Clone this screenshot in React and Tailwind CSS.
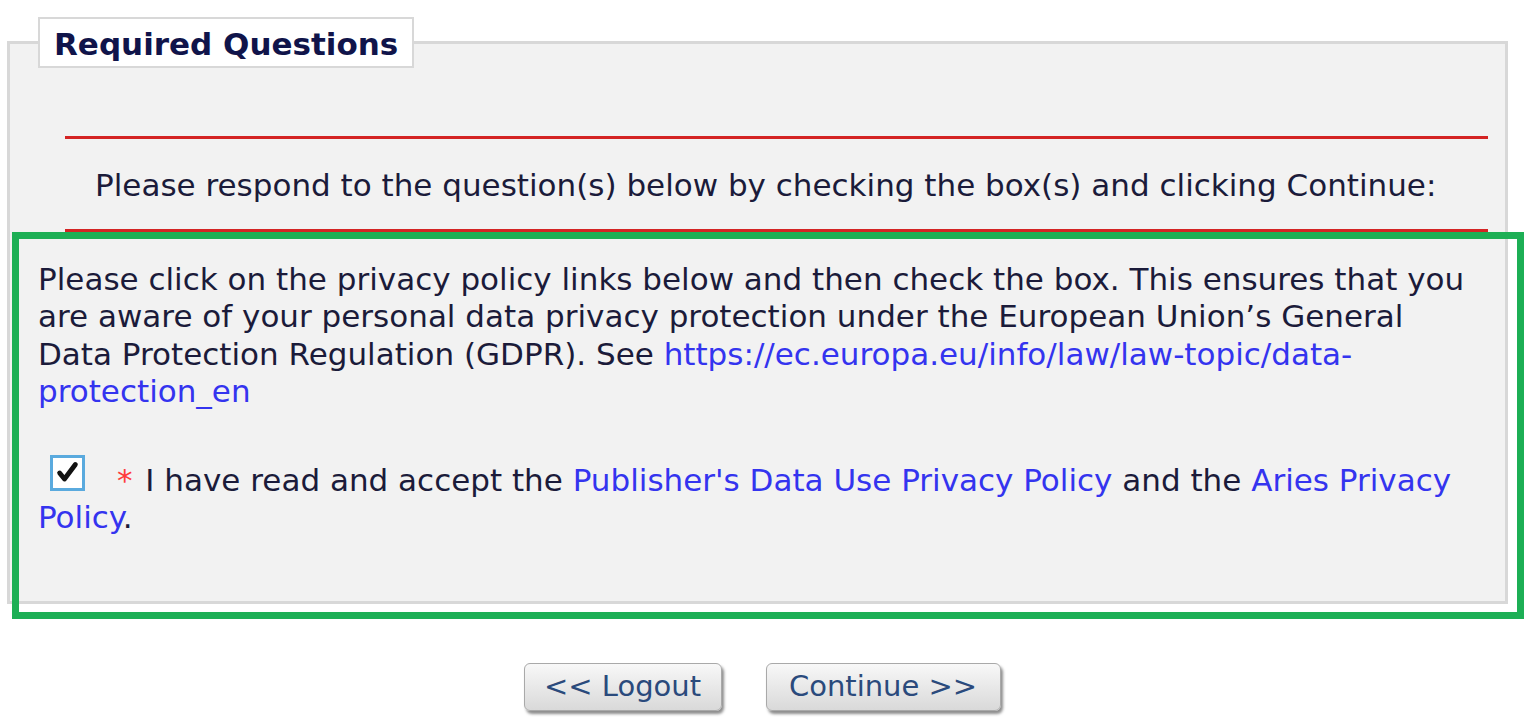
import React from "react"

const font = "font-['DejaVu_Sans',sans-serif]"

const Checkbox = () => (
    <span className="inline-block align-baseline w-[35px] h-[36px] border-[3px] border-[#5aaade] bg-white">
        <svg viewBox="0 0 24 24" className="w-full h-full">
            <path d="M5.5 12 L9.5 17 L18.5 5" fill="none" stroke="#111" strokeWidth="4" strokeLinecap="round" strokeLinejoin="round" />
        </svg>
    </span>
)

const Button = ({ label, width }) => (
    <button
        type="button"
        className={`${width} h-[48px] rounded-[6px] border border-[#a9a9a9] bg-gradient-to-b from-[#f8f8f8] to-[#d9d9d9] shadow-[2px_3px_3px_rgba(0,0,0,0.45)] text-[29px] leading-none text-[#2a4a7c]`}
    >
        {label}
    </button>
)

export default function App() {
    return (
        <div className={`relative w-full h-[718px] bg-white pt-[17px] ${font}`}>
            <fieldset className="ml-[7px] mr-[16px] border-[3px] border-[#d8d8d8] bg-[#f2f2f2] pb-[64px]">
                <legend className="ml-[28px] border-2 border-[#d8d8d8] bg-white px-[14px] pt-[7px] pb-[3px] text-[31px] leading-[37px] font-bold text-[#10144a]">
                    Required Questions
                </legend>

                <div className="mt-[68px] ml-[55px] mr-[17px] h-[3px] bg-[#d42424]" />
                <div className="mt-[28px] pl-[85px] text-[31px] leading-[37.5px] text-[#1b1b3a]">
                    Please respond to the question(s) below by checking the box(s) and clicking Continue:
                </div>
                <div className="mt-[24px] ml-[55px] mr-[17px] h-[3px] bg-[#d42424]" />

                <p className="mt-[29px] pl-[28px] pr-[10px] text-[31px] leading-[37.5px] text-[#1b1b3a]">
                    Please click on the privacy policy links below and then check the box. This ensures that you<br />
                    are aware of your personal data privacy protection under the European Union’s General<br />
                    Data Protection Regulation (GDPR). See <a href="#" className="text-[#3434ef]">https://ec.europa.eu/info/law/law-topic/data-<br />protection_en</a>
                </p>

                <div className="mt-[44px] pl-[28px] pr-[10px] text-[31px] leading-[37.5px] text-[#1b1b3a]">
                    <span className="ml-[12px]"><Checkbox /></span>
                    <span className="ml-[32px] mr-[3px] text-[#ff3b3b]">*</span>
                    {" "}I have read and accept the <a href="#" className="text-[#3434ef]">Publisher's Data Use Privacy Policy</a> and the <a href="#" className="text-[#3434ef]">Aries Privacy<br />Policy</a>.
                </div>
            </fieldset>

            <div className="mt-[59px] flex justify-center gap-[44px]">
                <Button label="<< Logout" width="w-[198px]" />
                <Button label="Continue >>" width="w-[235px]" />
            </div>

            <div className="absolute left-[12px] top-[232px] w-[1512px] h-[387px] border-[7px] border-[#1daf55] pointer-events-none" />
        </div>
    )
}
